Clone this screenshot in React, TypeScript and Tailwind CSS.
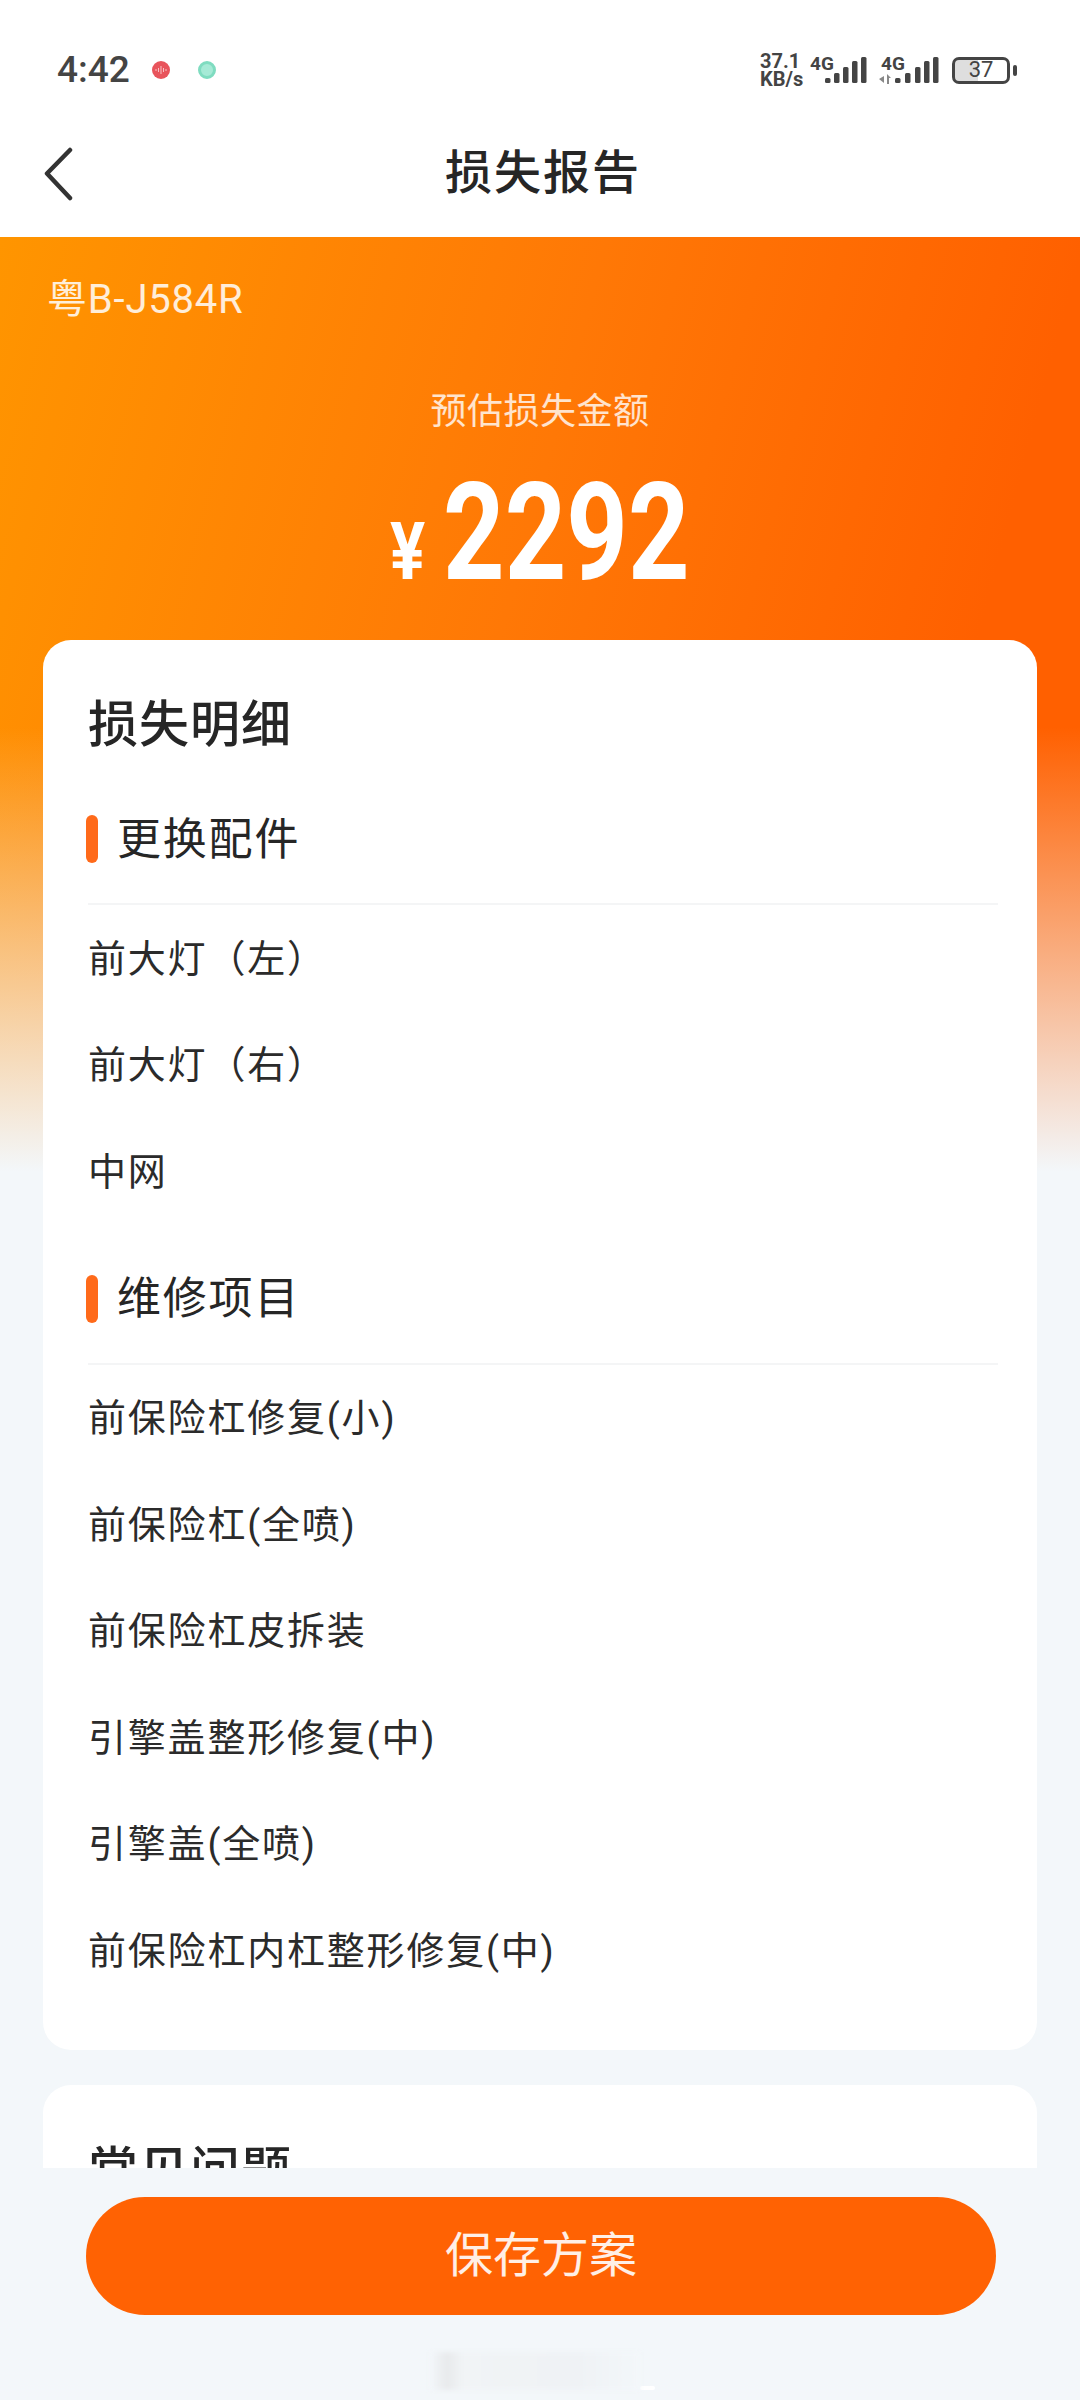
const replaceParts = ["前大灯（左）", "前大灯（右）", "中网"];
const repairItems = [
  "前保险杠修复(小)",
  "前保险杠(全喷)",
  "前保险杠皮拆装",
  "引擎盖整形修复(中)",
  "引擎盖(全喷)",
  "前保险杠内杠整形修复(中)",
];

function SignalBars({ hd }: { hd?: boolean }) {
  // second sim has the little data arrows in front of the bars
  const xs = hd ? [17, 27, 37, 46, 55] : [15, 24, 33, 42, 51];
  const tops = [25, 20, 14, 8, 4];
  return (
    <svg width={hd ? 61 : 57} height="34" viewBox={hd ? "0 0 61 34" : "0 0 57 34"} fill="#444">
      <text x={hd ? 3 : 0} y="17" fontSize="19" fontWeight="700" fontFamily="Roboto, sans-serif">4G</text>
      {hd && <path d="M1 26l5-3v7zM9 21l4 4h-2v6H9z" fill="#888" />}
      {xs.map((x, i) => (
        <rect key={x} x={x} y={tops[i]} width="5.5" height={30 - tops[i]} rx="1.5" />
      ))}
    </svg>
  );
}

function StatusBar() {
  return (
    <div className="flex h-[107px] items-start bg-white pl-[57px] pr-[63px] pt-[33px]">
      <div className="flex h-[74px] w-full items-center">
        <span className="w-[71px] text-[37px] font-medium text-[#444]">4:42</span>
        <span className="ml-[24px] flex size-[18px] items-center justify-center rounded-full bg-[#e8545c]">
          <svg width="12" height="8" viewBox="0 0 12 8" stroke="#f8c0c2" strokeWidth="1">
            <path d="M1 3v2M3.500 2v4M6 0v8M8.500 2v4M11 3v2" />
          </svg>
        </span>
        <span className="ml-[28px] size-[18px] rounded-full border-[3px] border-[#7fdcc0] bg-[#a6ead6]" />
        <div className="ml-auto flex items-center">
          <div className="w-[50px] text-[20px] font-bold leading-[18px] text-[#444]">
            <div>37.1</div>
            <div>KB/s</div>
          </div>
          <SignalBars />
          <div className="w-[11px]" />
          <SignalBars hd />
          <div className="ml-[13px] flex h-[27px] w-[58px] items-center justify-center overflow-hidden rounded-[7px] border-[3px] border-[#444] bg-[linear-gradient(to_right,#dedede_45%,transparent_45%)] text-[22px] leading-none text-[#444]">
            37
          </div>
          <div className="ml-[3px] h-[11px] w-[4px] rounded-full bg-[#444]" />
        </div>
      </div>
    </div>
  );
}

function NavBar() {
  return (
    <div className="relative flex h-[130px] items-center justify-center bg-white pl-[6px]">
      <svg className="absolute left-[43px] top-[40px]" width="32" height="54" viewBox="0 0 32 54" fill="none">
        <path d="M27 3L4 26.500L27 51" stroke="#333" strokeWidth="4.500" strokeLinecap="round" strokeLinejoin="round" />
      </svg>
      <h1 className="text-[47px] font-medium leading-none tracking-[2px] text-[#262626]">损失报告</h1>
    </div>
  );
}

function Hero() {
  return (
    <div className="h-[403px] text-white">
      <div className="pl-[47px] pt-[38px] text-[40px] leading-[50px] tracking-[0.8px] text-white/85">粤B-J584R</div>
      <div className="mt-[62px] text-center text-[36px] leading-[50px] tracking-[0.5px] text-white/80">预估损失金额</div>
      <div className="mt-[37px] flex h-[118px] items-baseline justify-center pr-[3px]">
        <span className="w-[37px] origin-left scale-x-[0.82] text-[80px] font-bold leading-[118px]">¥</span>
        <span className="ml-[16px] w-[244px] origin-left scale-x-[0.79] whitespace-nowrap text-[136px] font-bold leading-[118px]">
          2292
        </span>
      </div>
    </div>
  );
}

function SectionHeader({ title, className }: { title: string; className: string }) {
  return (
    <div className={className}>
      <div className="flex h-[76px] items-center gap-[19px]">
        <span className="h-[48px] w-[12px] rounded-full bg-[#ff6a1a]" />
        <span className="pt-[1px] text-[44px] leading-none tracking-[1.8px] text-[#262626]">{title}</span>
      </div>
      <div className="ml-[2px] mr-[-3px] mt-[26px] h-[2px] bg-[#f4f5f6]" />
    </div>
  );
}

function Row({ text }: { text: string }) {
  return (
    <div className="flex h-[106.5px] items-center pl-[2px] pt-[1px] text-[38px] leading-none tracking-[1.8px] text-[#2b2b2b]">
      {text}
    </div>
  );
}

export default function App() {
  return (
    <div className="flex h-[2400px] w-[1080px] flex-col overflow-hidden bg-[#f3f7fa] font-['Roboto','Noto_Sans_CJK_SC',sans-serif]">
      <StatusBar />
      <NavBar />
      <main className="h-[1931px] overflow-hidden bg-[linear-gradient(to_bottom,transparent_490px,#f3f7fa_935px),linear-gradient(105deg,#ff9500_0%,#ff7806_38%,#ff6000_68%)] bg-no-repeat">
        <Hero />
        <section className="mx-[43px] rounded-[28px] bg-white pb-[46px] pl-[43px] pr-[42px] pt-[45px]">
          <h2 className="pl-[2px] text-[50px] font-medium leading-[80px] tracking-[1px] text-[#262626]">损失明细</h2>
          <SectionHeader title="更换配件" className="mt-[36px]" />
          {replaceParts.map((item) => (
            <Row key={item} text={item} />
          ))}
          <SectionHeader title="维修项目" className="mt-[36px]" />
          {repairItems.map((item) => (
            <Row key={item} text={item} />
          ))}
        </section>
        <section className="mx-[43px] mt-[35px] rounded-[28px] bg-white pl-[45px] pt-[46px]">
          <h2 className="text-[50px] font-medium leading-[80px] tracking-[1px] text-[#262626]">常见问题</h2>
        </section>
      </main>
      <div className="flex-1 bg-[#f3f7fa] pl-[86px] pr-[84px] pt-[29px]">
        <button className="flex h-[118px] w-full items-center justify-center rounded-full bg-[#ff6203] text-[48px] leading-none text-white/90">
          保存方案
        </button>
        <div className="ml-[344px] mt-[37px] flex items-end">
          <div className="h-[38px] w-[210px] bg-[linear-gradient(to_right,#f3f7fa,#e8eaec_8%,#f1f4f6_16%,#eff2f5_70%,#f3f7fa)] blur-[2px]" />
          <div className="h-[4px] w-[15px] rounded-full bg-white" />
        </div>
      </div>
    </div>
  );
}
